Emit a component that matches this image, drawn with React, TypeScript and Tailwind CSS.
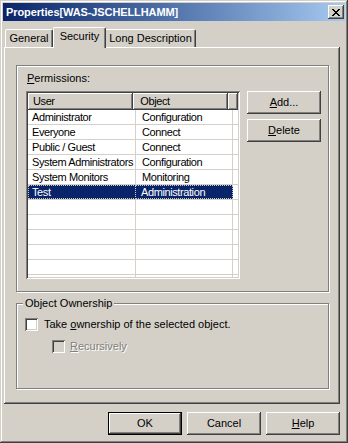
import React from "react";

const raised =
  "shadow-[inset_-1px_-1px_0_#404040,inset_1px_1px_0_#ffffff,inset_-2px_-2px_0_#808080,inset_2px_2px_0_#d4d0c8]";
const sunken =
  "shadow-[inset_1px_1px_0_#808080,inset_-1px_-1px_0_#ffffff,inset_2px_2px_0_#404040,inset_-2px_-2px_0_#d4d0c8]";
const etched = "border border-[#808080] shadow-[1px_1px_0_#ffffff,inset_1px_1px_0_#ffffff]";

function Btn({ children, className = "", def = false }: { children: React.ReactNode; className?: string; def?: boolean }) {
  if (def) {
    return (
      <div className={`border border-black bg-[#d4d0c8] ${className}`}>
        <div className={`w-full h-full flex items-center justify-center ${raised}`}>{children}</div>
      </div>
    );
  }
  return <div className={`flex items-center justify-center bg-[#d4d0c8] ${raised} ${className}`}>{children}</div>;
}

function Check({ disabled = false }: { disabled?: boolean }) {
  return <div className={`w-[13px] h-[13px] shrink-0 ${disabled ? "bg-[#d4d0c8]" : "bg-white"} ${sunken}`} />;
}

const rows: [string, string][] = [
  ["Administrator", "Configuration"],
  ["Everyone", "Connect"],
  ["Public / Guest", "Connect"],
  ["System Administrators", "Configuration"],
  ["System Monitors", "Monitoring"],
  ["Test", "Administration"],
  ["", ""],
  ["", ""],
  ["", ""],
  ["", ""],
  ["", ""],
  ["", ""],
];

export default function App() {
  return (
    <div
      className={`w-[348px] h-[443px] bg-[#d4d0c8] p-[3px] flex flex-col font-['Liberation_Sans',Arial,sans-serif] text-[11px] text-black leading-[13px] shadow-[inset_-1px_-1px_0_#404040,inset_1px_1px_0_#d4d0c8,inset_-2px_-2px_0_#808080,inset_2px_2px_0_#ffffff]`}
    >
      {/* Title bar */}
      <div className="h-[18px] flex items-center justify-between pl-[3px] pr-[1px] bg-linear-to-r from-[#0a246a] to-[#a6caf0]">
        <span className="text-white font-bold text-[11px] tracking-[-0.1px]">Properties[WAS-JSCHELLHAMM]</span>
        <div className={`w-[16px] h-[14px] bg-[#d4d0c8] flex items-center justify-center ${raised}`}>
          <svg width="8" height="7" viewBox="0 0 8 7" shapeRendering="crispEdges">
            <path
              d="M0 0h2v1h-2zM6 0h2v1h-2zM1 1h2v1h-2zM5 1h2v1h-2zM2 2h4v1h-4zM3 3h2v1h-2zM2 4h4v1h-4zM1 5h2v1h-2zM5 5h2v1h-2zM0 6h2v1h-2zM6 6h2v1h-2z"
              fill="#000"
            />
          </svg>
        </div>
      </div>

      {/* Body */}
      <div className="flex flex-col pt-[6px] pl-[1px] pr-[5px]">
        {/* Tabs */}
        <div className="h-[20px] flex items-end pl-[1px] relative z-10">
          <div className="w-[48px] h-[18px] flex items-center justify-center border-l border-t border-white border-r border-r-[#404040] rounded-tl-[2px] rounded-tr-[2px] shadow-[inset_-1px_0_0_#808080]">
            General
          </div>
          <div className="w-[53px] h-[21px] -mb-[1px] bg-[#d4d0c8] flex items-start pt-[2px] justify-center border-l border-t border-white border-r border-r-[#404040] rounded-tl-[2px] rounded-tr-[2px] shadow-[inset_-1px_0_0_#808080]">
            Security
          </div>
          <div className="w-[90px] h-[18px] flex items-center justify-center border-t border-white border-r border-r-[#404040] rounded-tr-[2px] shadow-[inset_-1px_0_0_#808080]">
            Long Description
          </div>
        </div>

        {/* Panel */}
        <div className="h-[357px] pl-[12px] pt-[18px] shadow-[inset_-1px_-1px_0_#404040,inset_1px_1px_0_#ffffff,inset_-2px_-2px_0_#808080]">
          {/* Permissions group */}
          <div className={`w-[313px] h-[227px] ${etched} pt-[6px] pl-[9px] flex flex-col`}>
            <div className="pl-[1px] h-[13px]">
              <span className="underline">P</span>ermissions:
            </div>
            <div className="flex mt-[6px]">
              {/* List view */}
              <div className={`w-[214px] h-[188px] bg-white p-[2px] ${sunken}`}>
                <div className="w-full h-full overflow-hidden flex flex-col tracking-[-0.4px]">
                  <div className="h-[17px] flex shrink-0">
                    <div className={`w-[108px] h-full pl-[5px] flex items-center ${raised} bg-[#d4d0c8]`}>User</div>
                    <div className={`w-[97px] h-full pl-[7px] flex items-center ${raised} bg-[#d4d0c8]`}>Object</div>
                    <div className={`w-[10px] h-full shrink-0 ${raised} bg-[#d4d0c8]`} />
                  </div>
                  {rows.map(([u, o], i) => {
                    const sel = i === 5;
                    return (
                      <div key={i} className="h-[15px] flex shrink-0 border-b border-[#d4d0c8]">
                        <div
                          className={`w-[108px] h-full flex border-r border-[#d4d0c8] ${sel ? "bg-[#0a246a] text-white border-l border-t border-b border-dotted border-l-[#c8c8c8] border-t-[#c8c8c8] border-b-[#c8c8c8] pl-[3px]" : "pl-[4px]"} items-center`}
                        >
                          {u}
                        </div>
                        <div
                          className={`w-[97px] h-full flex items-center ${sel ? "bg-[#0a246a] text-white pl-[5px] border-t border-b border-r border-dotted border-[#c8c8c8]" : "pl-[6px] border-r border-[#d4d0c8]"}`}
                        >
                          {o}
                        </div>
                      </div>
                    );
                  })}
                </div>
              </div>
              {/* Buttons */}
              <div className="flex flex-col ml-[7px] gap-[5px]">
                <Btn className="w-[74px] h-[23px]">
                  <span>
                    <span className="underline">A</span>dd...
                  </span>
                </Btn>
                <Btn className="w-[74px] h-[23px]">
                  <span>
                    <span className="underline">D</span>elete
                  </span>
                </Btn>
              </div>
            </div>
          </div>

          {/* Object Ownership group */}
          <div className={`relative w-[313px] h-[86px] mt-[11px] ${etched} pt-[14px] pl-[8px]`}>
            <div className="absolute -top-[7px] left-[6px] px-[2px] bg-[#d4d0c8]">Object Ownership</div>
            <div className="flex items-center h-[13px]">
              <Check />
              <span className="ml-[6px]">
                Take <span className="underline">o</span>wnership of the selected object.
              </span>
            </div>
            <div className="flex items-center h-[13px] mt-[9px] pl-[27px]">
              <Check disabled />
              <span className="ml-[5px] text-[#808080] [text-shadow:1px_1px_0_#ffffff]">
                <span className="underline">R</span>ecursively
              </span>
            </div>
          </div>
        </div>

        {/* Bottom buttons */}
        <div className="flex justify-end gap-[5px] mt-[8px]">
          <Btn def className="w-[74px] h-[23px]">
            OK
          </Btn>
          <Btn className="w-[74px] h-[23px]">Cancel</Btn>
          <Btn className="w-[74px] h-[23px]">
            <span>
              <span className="underline">H</span>elp
            </span>
          </Btn>
        </div>
      </div>
    </div>
  );
}
